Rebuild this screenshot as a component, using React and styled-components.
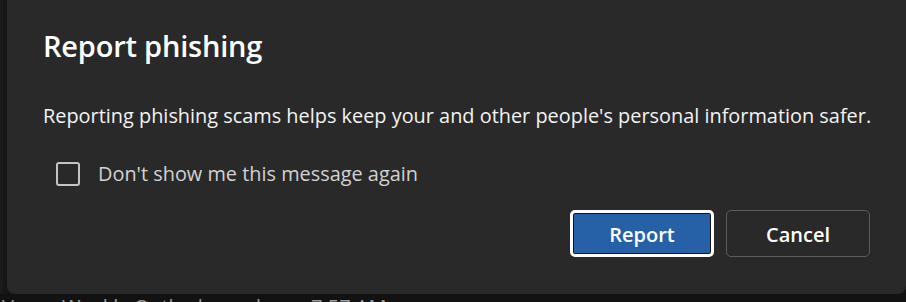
import styled, { createGlobalStyle } from 'styled-components';

const Global = createGlobalStyle`
html, body {
    margin:0;
    padding:0;
    background:#121212;
    width:906px;
    height:302px;
    overflow:hidden;
}
* { box-sizing:border-box; }
`;

const Page = styled.div`
display:flex;
flex-direction:column;
width:906px;
height:302px;
font-family:"Open Sans", "Noto Sans", sans-serif;
`;

const Row = styled.div`
display:flex;
height:294px;
`;

const Gutter = styled.div`
width:7px;
background:#161616;
border-left:3px solid #1b1b1b;
`;

const Dialog = styled.section`
flex:1;
background:#292929;
border-radius:0 0 8px 8px;
padding:27px 36px 37px 36px;
display:flex;
flex-direction:column;
color:#ffffff;
`;

const Title = styled.h2`
margin:0;
font-size:29px;
font-weight:600;
line-height:38px;
letter-spacing:-0.2px;
`;

const Body = styled.p`
margin:38px -4px 0 0;
font-size:19.9px;
line-height:26px;
white-space:nowrap;
color:#f3f3f3;
`;

const CheckRow = styled.label`
display:flex;
align-items:center;
gap:18px;
margin:31px 0 0 13px;
font-size:19.9px;
color:#d2d2d2;
`;

const Box = styled.span`
width:24px;
height:24px;
border:2px solid #c4c4c4;
border-radius:3px;
`;

const Actions = styled.div`
display:flex;
justify-content:flex-end;
gap:12px;
margin-top:auto;
`;

const Button = styled.button`
width:144px;
height:47px;
border-radius:5px;
padding:2px 0 0 0;
font-family:inherit;
font-size:20px;
font-weight:600;
color:#ffffff;
cursor:pointer;
background:${p => p.$primary ? '#2661a8' : 'transparent'};
border:${p => p.$primary ? '3px solid #ffffff' : '1px solid #5c5c5c'};
box-shadow:${p => p.$primary ? 'inset 0 0 0 1px #141414' : 'none'};
`;

const Footer = styled.div`
height:8px;
overflow:hidden;
display:flex;
color:#9a9a9a;
font-size:20px;
line-height:20px;
padding-top:3px;
`;

const FootText = styled.span`
margin-left:${p => p.$left}px;
white-space:nowrap;
`;

export default function App() {
    return (
        <>
            <Global />
            <Page>
                <Row>
                    <Gutter />
                    <Dialog>
                        <Title>Report phishing</Title>
                        <Body>Reporting phishing scams helps keep your and other people's personal information safer.</Body>
                        <CheckRow>
                            <Box />
                            Don't show me this message again
                        </CheckRow>
                        <Actions>
                            <Button $primary>Report</Button>
                            <Button>Cancel</Button>
                        </Actions>
                    </Dialog>
                </Row>
                <Footer>
                    <FootText $left={2}>V</FootText>
                    <FootText $left={48}>Weekly Outlook</FootText>
                    <FootText $left={10}>ready</FootText>
                    <FootText $left={40}>7:57 AM</FootText>
                </Footer>
            </Page>
        </>
    )
}
